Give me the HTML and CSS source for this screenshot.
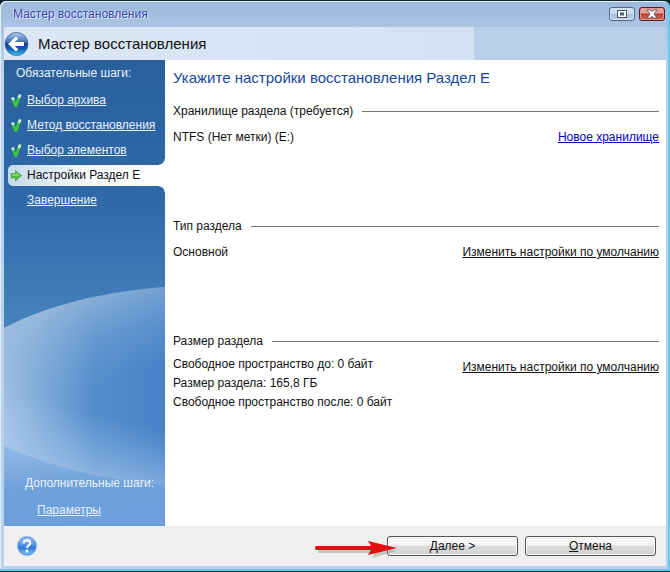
FILE: index.html
```
<!DOCTYPE html>
<html lang="ru">

<head>
    <meta charset="UTF-8">
    <meta name="viewport" content="width=device-width, initial-scale=1.0">
    <title>Мастер восстановления</title>
    <link rel="stylesheet" href="styles.css">
</head>

<body>
    <div class="window">
        <div class="titlebar">
            <span class="caption">Мастер восстановления</span>
            <button type="button" class="win-btn" aria-label="Развернуть">
                <svg width="12" height="10" viewBox="0 0 12 10">
                    <rect x="1.5" y="1.5" width="9" height="7" fill="#fff" stroke="#4b5a70" />
                    <rect x="4" y="3.5" width="4" height="3" fill="#4b5a70" />
                </svg>
            </button>
            <button type="button" class="win-btn close" aria-label="Закрыть">
                <svg width="12" height="10" viewBox="0 0 12 10">
                    <path d="M1 1h3.500L6 2.700 7.500 1H11L8 5l3 4H7.500L6 7.300 4.500 9H1l3-4z" fill="#fff" stroke="#5c4a55" stroke-width=".8" />
                </svg>
            </button>
        </div>

        <div class="header">
            <div class="header-main">
                <button type="button" class="back" aria-label="Назад">
                    <svg width="25" height="26" viewBox="0 0 25 26">
                        <defs>
                            <linearGradient id="back-fill" x1="0" y1="0" x2="0" y2="1">
                                <stop offset="0" stop-color="#b4ccec" />
                                <stop offset=".42" stop-color="#416fb8" />
                                <stop offset=".5" stop-color="#0c3b8c" />
                                <stop offset=".72" stop-color="#1260b4" />
                                <stop offset="1" stop-color="#38c8f4" />
                            </linearGradient>
                        </defs>
                        <circle cx="12.500" cy="13" r="11.500" fill="url(#back-fill)" stroke="#5373a8" />
                        <path d="M4 13l8-7.500 2.200 2.200L10.800 11H20v4H10.800l3.400 3.300-2.200 2.200z" fill="#fff" />
                    </svg>
                </button>
                <h1>Мастер восстановления</h1>
            </div>
        </div>

        <div class="body">
            <nav class="sidebar">
                <svg class="sidebar-bg" viewBox="0 0 161 466" preserveAspectRatio="none" aria-hidden="true">
                    <defs>
                        <linearGradient id="sky" x1="0" y1="0" x2="0" y2="1">
                            <stop offset="0" stop-color="#29609c" />
                            <stop offset=".3" stop-color="#2f69aa" />
                            <stop offset=".55" stop-color="#4580bb" />
                            <stop offset="1" stop-color="#4f8ac2" />
                        </linearGradient>
                        <linearGradient id="planet" x1="0" y1="0" x2="1" y2="0">
                            <stop offset="0" stop-color="#a6c4e4" />
                            <stop offset=".25" stop-color="#7faad8" />
                            <stop offset=".55" stop-color="#558ecc" />
                            <stop offset="1" stop-color="#4883c8" />
                        </linearGradient>
                        <linearGradient id="rim" gradientUnits="userSpaceOnUse" x1="70" y1="238" x2="100" y2="325">
                            <stop offset="0" stop-color="#9dbcdc" stop-opacity=".75" />
                            <stop offset="1" stop-color="#6f9fd2" stop-opacity="0" />
                        </linearGradient>
                        <linearGradient id="glow" gradientUnits="userSpaceOnUse" x1="96" y1="355" x2="82" y2="412">
                            <stop offset="0" stop-color="#a9c8ec" stop-opacity="0" />
                            <stop offset="1" stop-color="#a9c8ec" stop-opacity=".6" />
                        </linearGradient>
                        <linearGradient id="ground" x1="0" y1="0" x2=".15" y2="1">
                            <stop offset="0" stop-color="#94b9e4" />
                            <stop offset=".55" stop-color="#6fa1da" />
                            <stop offset="1" stop-color="#6c9fdb" />
                        </linearGradient>
                    </defs>
                    <rect width="161" height="466" fill="url(#sky)" />
                    <path d="M0 268C45 244 105 231 161 227V466H0z" fill="url(#planet)" />
                    <path d="M0 268C45 244 105 231 161 227V466H0z" fill="url(#rim)" />
                    <path d="M0 268V466H161V268z" fill="url(#glow)" />
                    <path d="M0 386C42 405 100 421 161 425V466H0z" fill="url(#ground)" />
                </svg>

                <h2 class="steps-title">Обязательные шаги:</h2>
                <ul class="steps">
                    <li>
                        <svg class="mark" width="12" height="14" viewBox="0 0 12 14">
                            <path d="M1 4l2.700-1 2 5L9 0l2.500 1L7 13H4.500z" fill="#3bc43c" />
                            <path d="M1 4l2.700-1 1 2.500-2.300 1zM9 0l2.500 1L10 4.500l-2.500-1z" fill="#c4ecd2" />
                        </svg>
                        <a href="#">Выбор архива</a>
                    </li>
                    <li>
                        <svg class="mark" width="12" height="14" viewBox="0 0 12 14">
                            <path d="M1 4l2.700-1 2 5L9 0l2.500 1L7 13H4.500z" fill="#3bc43c" />
                            <path d="M1 4l2.700-1 1 2.500-2.300 1zM9 0l2.500 1L10 4.500l-2.500-1z" fill="#c4ecd2" />
                        </svg>
                        <a href="#">Метод восстановления</a>
                    </li>
                    <li>
                        <svg class="mark" width="12" height="14" viewBox="0 0 12 14">
                            <path d="M1 4l2.700-1 2 5L9 0l2.500 1L7 13H4.500z" fill="#3bc43c" />
                            <path d="M1 4l2.700-1 1 2.500-2.300 1zM9 0l2.500 1L10 4.500l-2.500-1z" fill="#c4ecd2" />
                        </svg>
                        <a href="#">Выбор элементов</a>
                    </li>
                    <li class="current">
                        <svg class="mark" width="12" height="14" viewBox="0 0 12 14">
                            <path d="M1 4.500h4.500V1.500L11.500 6.500 5.500 12V9H1z" fill="#55b848" stroke="#3c9a3a" stroke-width=".6" />
                            <path d="M2 5.500h4.500V4L9.500 6.500H2z" fill="#a4e27c" />
                        </svg>
                        <span>Настройки Раздел E</span>
                    </li>
                    <li>
                        <span class="mark"></span>
                        <a href="#">Завершение</a>
                    </li>
                </ul>
                <div class="extra">
                    <h2>Дополнительные шаги:</h2>
                    <a href="#">Параметры</a>
                </div>
            </nav>

            <main class="content">
                <h2 class="page-title">Укажите настройки восстановления Раздел E</h2>

                <section>
                    <h3>Хранилище раздела (требуется)</h3>
                    <div class="row">
                        <p>NTFS (Нет метки) (E:)</p>
                        <a href="#" class="new">Новое хранилище</a>
                    </div>
                </section>

                <section>
                    <h3>Тип раздела</h3>
                    <div class="row">
                        <p>Основной</p>
                        <a href="#">Изменить настройки по умолчанию</a>
                    </div>
                </section>

                <section>
                    <h3>Размер раздела</h3>
                    <div class="row size">
                        <div>
                            <p>Свободное пространство до: 0 байт</p>
                            <p>Размер раздела: 165,8 ГБ</p>
                            <p>Свободное пространство после: 0 байт</p>
                        </div>
                        <a href="#">Изменить настройки по умолчанию</a>
                    </div>
                </section>
            </main>
        </div>

        <footer class="footer">
            <button type="button" class="help" aria-label="Справка">
                <svg width="22" height="22" viewBox="0 0 22 22">
                    <defs>
                        <linearGradient id="help-fill" x1="0" y1="0" x2="0" y2="1">
                            <stop offset="0" stop-color="#a9cdf8" />
                            <stop offset=".5" stop-color="#4489e6" />
                            <stop offset=".6" stop-color="#3478dc" />
                            <stop offset="1" stop-color="#86c8fc" />
                        </linearGradient>
                    </defs>
                    <circle cx="11" cy="11" r="10.500" fill="#c6def6" />
                    <circle cx="11" cy="11" r="9" fill="url(#help-fill)" stroke="#4a86d4" />
                    <path d="M7.800 8.500C7.800 4.500 14.200 4.500 14.200 8.300C14.200 10.500 11 10.500 11 13" fill="none" stroke="#fff" stroke-width="2.200" />
                    <circle cx="11" cy="16" r="1.400" fill="#fff" />
                </svg>
            </button>
            <div class="actions">
                <button type="button" class="btn"><u>Д</u>алее &gt;</button>
                <button type="button" class="btn"><u>О</u>тмена</button>
                <svg class="pointer" width="86" height="26" viewBox="0 0 86 26" aria-hidden="true">
                    <path d="M4 14h56l-3-4 25 5-24 7 3-5H4z" fill="#777" opacity=".35" />
                    <path d="M2 10h55l-3-5 29 7-29 7 3-5H2q-2-2 0-4z" fill="#e01010" />
                </svg>
            </div>
        </footer>
    </div>
</body>

</html>
```

FILE: styles.css
```
* {
    box-sizing: border-box;
}

body {
    margin: 0;
    background: #10242e;
    font-family: "Liberation Sans", Arial, sans-serif;
    font-size: 12px;
    line-height: 19px;
    color: #111;
}

h1, h2, h3, p, ul {
    margin: 0;
    padding: 0;
    font-size: inherit;
    font-weight: normal;
}

button {
    padding: 0;
    font-family: inherit;
    font-size: inherit;
    cursor: pointer;
}

svg {
    display: block;
}

a {
    color: inherit;
}

/* frame */

.window {
    display: flex;
    flex-direction: column;
    min-height: calc(100vh - 2px);
    margin: 1px 0;
    border: solid #5fcdf0;
    border-width: 0 2px 2px 0;
    border-radius: 6px 6px 0 0;
    padding: 0 2px 3px 4px;
    background: linear-gradient(#9db9da, #bcd2ec 60px);
    box-shadow: inset 1px 1px #e4eef8;
}

.titlebar {
    display: flex;
    align-items: center;
    gap: 4px;
    height: 26px;
    padding: 0 1px 0 9px;
}

.caption {
    flex: 1;
    color: #3344ad;
    text-shadow: 1px 1px #dfe9f8, -1px 0 #cddcf0;
}

.win-btn {
    display: flex;
    align-items: center;
    justify-content: center;
    width: 26px;
    height: 14px;
    border: 1px solid #53698a;
    border-radius: 3px;
    background: linear-gradient(#cfdeef 45%, #a3bcdb 50%, #bdd2ea);
    box-shadow: inset 0 0 0 1px #d5e3f2;
}

.win-btn.close {
    border-color: #521d26;
    background: linear-gradient(#e0a197 40%, #c04030 50%, #d46a52);
    box-shadow: inset 0 0 0 1px #dd9a8c;
}

.header {
    height: 33px;
    background: #b8cee9;
}

.header-main {
    display: flex;
    align-items: center;
    gap: 9px;
    width: 71%;
    height: 100%;
    background: linear-gradient(90deg, #dce7f4, #d3e2f3);
}

.header-main h1,
.page-title {
    font-size: 15px;
    line-height: 24px;
}

.back {
    height: 26px;
    border: 0;
    background: none;
}

.body {
    flex: 1;
    display: flex;
    background: #fff;
}

/* sidebar */

.sidebar {
    position: relative;
    display: flex;
    flex-direction: column;
    width: 161px;
    padding: 4px 0 6px;
    color: #e8f1fb;
}

.sidebar-bg {
    position: absolute;
    top: 0;
    left: 0;
    width: 100%;
    height: 100%;
}

.steps-title,
.steps,
.extra {
    position: relative;
}

.steps-title {
    padding-left: 12px;
}

.steps {
    display: flex;
    flex-direction: column;
    gap: 4px;
    margin-top: 7px;
    list-style: none;
}

.steps li {
    display: flex;
    align-items: center;
    gap: 5px;
    height: 21px;
    margin-left: 4px;
    padding-left: 2px;
}

.mark {
    width: 12px;
}

.steps .current {
    position: relative;
    border-radius: 5px 0 0 5px;
    background: linear-gradient(90deg, #c5daea, #f4f9fc 50%, #fff);
    color: #111;
}

/* rounded joints between the active step and the page */
.current::before,
.current::after {
    content: "";
    position: absolute;
    right: 0;
    width: 6px;
    height: 6px;
}

.current::before {
    bottom: 100%;
    background: radial-gradient(circle at 0 0, transparent 5px, #fff 6px);
}

.current::after {
    top: 100%;
    background: radial-gradient(circle at 0 100%, transparent 5px, #fff 6px);
}

.extra {
    margin-top: auto;
    padding-left: 21px;
}

.extra a {
    display: inline-block;
    margin: 8px 0 0 12px;
}

/* content */

.content {
    flex: 1;
    padding: 6px 7px 0 8px;
}

.page-title {
    margin-bottom: 15px;
    color: #17479e;
}

.content section {
    min-height: 115px;
}

.content h3 {
    display: flex;
    align-items: center;
    gap: 9px;
    height: 13px;
}

.content h3::after {
    content: "";
    flex: 1;
    height: 1px;
    background: #777;
}

.row {
    display: flex;
    align-items: flex-start;
    justify-content: space-between;
    padding: 10px 0 0;
}

.row.size {
    padding-top: 7px;
}

.row.size a {
    padding-top: 3px;
}

.new {
    color: #0000c8;
}

/* footer */

.footer {
    display: flex;
    align-items: center;
    justify-content: space-between;
    height: 40px;
    padding: 0 10px 0 12px;
    background: #efefef;
}

.help {
    border: 0;
    background: none;
}

.actions {
    position: relative;
    display: flex;
    gap: 7px;
}

.btn {
    width: 131px;
    height: 20px;
    border: 1px solid #555;
    border-radius: 3px;
    background: linear-gradient(#f6f6f6 45%, #dcdcdc 50%, #d2d2d2);
    box-shadow: inset 0 0 0 1px #f8f8f8;
    color: #111;
}

.pointer {
    position: absolute;
    top: 0;
    left: -73px;
}
```
